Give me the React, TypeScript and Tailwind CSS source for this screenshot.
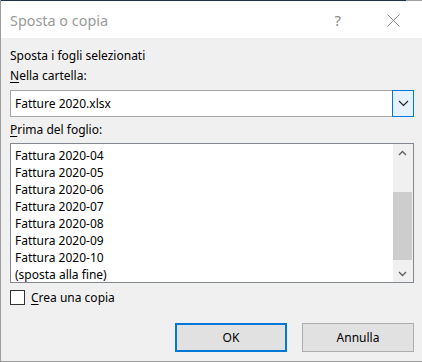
import React from "react";

const items = [
  "Fattura 2020-04",
  "Fattura 2020-05",
  "Fattura 2020-06",
  "Fattura 2020-07",
  "Fattura 2020-08",
  "Fattura 2020-09",
  "Fattura 2020-10",
  "(sposta alla fine)",
];

const App = () => {
  return (
    <div className="w-[422px] h-[362px] flex flex-col bg-[#f0f0f0] border-l border-b border-[#9c9c9c] font-['Noto_Sans',sans-serif] text-[12px] text-black overflow-hidden">
      {/* top edge */}
      <div className="flex h-px shrink-0">
        <div className="w-[405px] bg-[#1d3047]" />
        <div className="flex-1 bg-[#a0a0a0]" />
      </div>

      {/* title bar */}
      <div className="h-[37px] shrink-0 flex items-center bg-white pl-[9px] pt-[2px]">
        <span className="text-[14.4px] text-[#9a9a9a]">Sposta o copia</span>
        <span className="ml-auto mr-[46px] text-[15px] text-[#8a8a8a]">?</span>
        <svg width="13" height="13" viewBox="0 0 13 13" className="mr-[22px]">
          <path d="M0.5 0.5 L12.5 12.5 M12.5 0.5 L0.5 12.5" stroke="#8a8a8a" strokeWidth="1" />
        </svg>
      </div>

      <div className="flex flex-col pl-[9px] pr-[8px] pt-[10px]">
        <div className="h-4 leading-4">Sposta i fogli selezionati</div>
        <div className="h-4 leading-4 mt-1">
          <span className="underline underline-offset-2">N</span>ella cartella:
        </div>

        {/* combobox */}
        <div className="mt-[6px] h-[27px] flex">
          <div className="flex-1 flex items-center bg-white border border-r-0 border-[#a6a6a6] pl-[4px]">
            Fatture 2020.xlsx
          </div>
          <div className="w-[22px] flex items-center justify-center bg-[#e5f1fb] border border-[#0078d7]">
            <svg width="11" height="7" viewBox="0 0 11 7">
              <path d="M1 1 L5.5 5.5 L10 1" stroke="#222" strokeWidth="1.2" fill="none" />
            </svg>
          </div>
        </div>

        <div className="h-4 leading-4 mt-[5px]">
          <span className="underline underline-offset-2">P</span>rima del foglio:
        </div>

        {/* list box */}
        <div className="mt-[5px] h-[140px] flex border border-[#828790] bg-white">
          <div className="flex-1 flex flex-col pl-[4px] pt-[3px]">
            {items.map((it) => (
              <div key={it} className="h-[17px] leading-[17px]">
                {it}
              </div>
            ))}
          </div>
          <div className="w-[20px] flex flex-col bg-[#f0f0f0]">
            <div className="h-[17px] flex items-center justify-center pr-px">
              <svg width="9" height="6" viewBox="0 0 9 6">
                <path d="M1 5 L4.5 1.5 L8 5" stroke="#606060" strokeWidth="1.4" fill="none" />
              </svg>
            </div>
            <div className="h-[31px]" />
            <div className="h-[68px] w-[19px] bg-[#cdcdcd]" />
            <div className="flex-1" />
            <div className="h-[17px] flex items-center justify-center pr-px">
              <svg width="9" height="6" viewBox="0 0 9 6">
                <path d="M1 1 L4.5 4.5 L8 1" stroke="#606060" strokeWidth="1.4" fill="none" />
              </svg>
            </div>
          </div>
        </div>

        {/* checkbox */}
        <div className="mt-[7px] flex items-center h-[15px]">
          <div className="w-[15px] h-[15px] border border-[#333] bg-white" />
          <span className="ml-[6px]">
            <span className="underline underline-offset-2">C</span>rea una copia
          </span>
        </div>

        {/* buttons */}
        <div className="mt-[18px] flex justify-end gap-[15px]">
          <button className="w-[112px] h-[29px] bg-[#e1e1e1] border-2 border-[#0078d7]">OK</button>
          <button className="w-[112px] h-[29px] bg-[#e1e1e1] border border-[#adadad]">Annulla</button>
        </div>
      </div>
    </div>
  );
};

export default App;
